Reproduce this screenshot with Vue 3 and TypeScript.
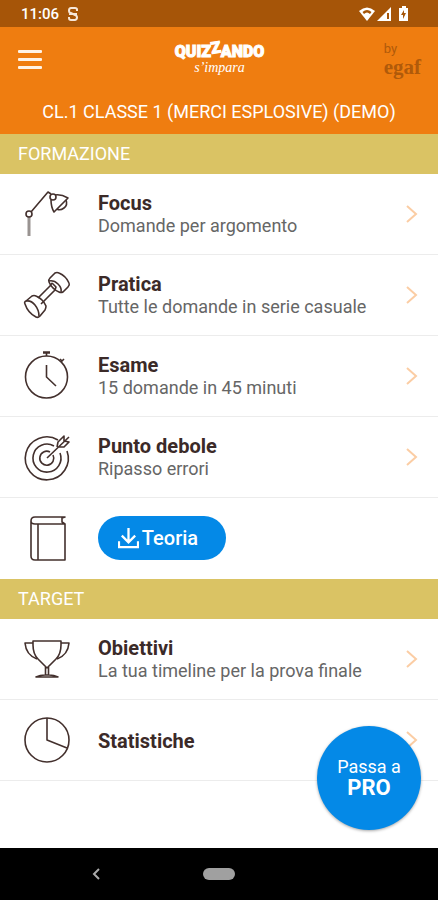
<script setup lang="ts">
type IconName = 'lamp' | 'dumbbell' | 'stopwatch' | 'target' | 'book' | 'trophy' | 'pie'

interface Entry {
  icon: IconName
  title: string
  subtitle?: string
  download?: boolean
}

interface Section {
  heading: string
  entries: Entry[]
}

const sections: Section[] = [
  {
    heading: 'FORMAZIONE',
    entries: [
      { icon: 'lamp', title: 'Focus', subtitle: 'Domande per argomento' },
      { icon: 'dumbbell', title: 'Pratica', subtitle: 'Tutte le domande in serie casuale' },
      { icon: 'stopwatch', title: 'Esame', subtitle: '15 domande in 45 minuti' },
      { icon: 'target', title: 'Punto debole', subtitle: 'Ripasso errori' },
      { icon: 'book', title: 'Teoria', download: true },
    ],
  },
  {
    heading: 'TARGET',
    entries: [
      { icon: 'trophy', title: 'Obiettivi', subtitle: 'La tua timeline per la prova finale' },
      { icon: 'pie', title: 'Statistiche' },
    ],
  },
]

const iconShapes: Record<IconName, string[]> = {
  lamp: [
    'M3 24a3 3 0 1 0 6 0a3 3 0 1 0-6 0',
    'M8 22L25 2L28 4',
    'M27 7a3 3 0 1 0 6 0a3 3 0 1 0-6 0',
    'M28 10Q28 17 31 22L45 8Q38 4 32 5',
    'M43 10Q45 15 41 18T34 19',
  ],
  dumbbell: [
    'M26 11Q25 9 27 7L32 2Q34 1 36 2Q43 5 46 12Q47 14 45 16L40 21Q38 22 36 21Q29 18 26 11Z',
    'M26 10Q31 9 35 13T38 21',
    'M29 12L33 16L32 19L18 33M29 12L27 15L15 27',
    'M2 33Q1 31 3 30L9 25Q11 24 13 25Q20 28 23 35Q23 37 22 39L17 45Q15 47 13 46Q5 42 2 33Z',
    'M3 30Q8 29 12 34T16 45',
  ],
  stopwatch: [
    'M2.5 25a21 21 0 1 0 42 0a21 21 0 1 0-42 0',
    'M20 0H27M20 1H27M23.5 0V4M37 7L39 9M38 10L41 7',
    'M23.5 13V25L33 34',
  ],
  target: [
    'M35 7A21.5 21.5 0 1 0 44 18',
    'M31 13A14 14 0 1 0 37 20',
    'M27 19A7 7 0 1 0 30 22',
    'M24 25L46 4M34 14L35 9L41 3L41 8L46 9L41 14L35 14',
  ],
  book: [
    'M42 10V46H12Q8 46 8 42V7Q8 3 12 3H42L39 4V8L42 10H12Q8 10 8 7',
    'M15 10V46',
  ],
  trophy: [
    'M10 6H38V10Q38 19 33 24L24 33L15 24Q10 19 10 10Z',
    'M10 8H2Q3 20 14 24M38 8H46Q45 20 34 24',
    'M22.500 32V40M25.500 32V40M13 42Q17 40 22 40H26Q31 40 35 42Z',
  ],
  pie: ['M2 24a22 22 0 1 0 44 0a22 22 0 1 0-44 0', 'M24 2V24L44 32'],
}
</script>

<template>
  <div class="app">
    <div class="status">
      <span class="clock">11:06</span>
      <svg class="status-s" viewBox="0 0 12 16" aria-hidden="true">
        <path d="M10 5V3.500Q10 2 8 2H4Q2 2 2 4.500T4 7L8 9Q10 9.500 10 11.500T8 14H4Q2 14 2 12V11M2 8H10" />
      </svg>
      <svg class="status-right" viewBox="0 0 50 16" aria-hidden="true">
        <path d="M0 5Q8-2 16 5L8 15Z" />
        <path class="cut" d="M3.500 6Q8 2 12.500 6L11 8Q8 5 5 8Z" />
        <path d="M18 15L32 1V15Z" />
        <path class="cut" d="M28 7H30V13H28Z" />
        <path d="M41 2H43V0H47V2H49V15H40V2Z" />
        <path class="cut" d="M45 4L42 9H44V13L47 7H45Z" />
      </svg>
    </div>

    <header class="header">
      <div class="bar">
        <button class="menu" type="button" aria-label="Menu"><i></i><i></i><i></i></button>
        <div class="logo">
          <span class="logo-name">QUIZ<span class="raised">Z</span>ANDO</span>
          <span class="logo-tag">s’impara</span>
        </div>
        <div class="brand">
          <span class="brand-by">by</span>
          <span class="brand-name">egaf</span>
        </div>
      </div>
      <h1 class="course">CL.1 CLASSE 1 (MERCI ESPLOSIVE) (DEMO)</h1>
    </header>

    <main class="content">
      <section v-for="section in sections" :key="section.heading">
        <h2 class="heading">{{ section.heading }}</h2>
        <component
          :is="entry.download ? 'div' : 'a'"
          v-for="entry in section.entries"
          :key="entry.title"
          class="row"
          :href="entry.download ? undefined : '#'"
        >
          <svg class="icon" viewBox="0 0 48 48" aria-hidden="true">
            <path v-if="entry.icon === 'lamp'" class="pole" d="M6 27V46" />
            <path v-for="shape in iconShapes[entry.icon]" :key="shape" :d="shape" />
          </svg>
          <button v-if="entry.download" class="pill" type="button">
            <svg class="download" viewBox="0 0 22 22" aria-hidden="true">
              <path d="M11 0V14M4 8L11 15L18 8M1 14V20H21V14" />
            </svg>
            {{ entry.title }}
          </button>
          <template v-else>
            <span class="text">
              <span class="title">{{ entry.title }}</span>
              <span v-if="entry.subtitle" class="subtitle">{{ entry.subtitle }}</span>
            </span>
            <svg class="chevron" viewBox="0 0 12 18" aria-hidden="true">
              <path d="M1 1L10 9L1 17" />
            </svg>
          </template>
        </component>
      </section>
      <button class="pro" type="button"><span>Passa a</span><strong>PRO</strong></button>
    </main>

    <nav class="system">
      <button class="back" type="button" aria-label="Indietro">
        <svg viewBox="0 0 8 12" aria-hidden="true"><path d="M7 1L2 6L7 11" /></svg>
      </button>
      <button class="home" type="button" aria-label="Home"></button>
    </nav>
  </div>
</template>

<style>
body {
  background: #fff;
}
</style>

<style scoped>
.app {
  display: flex;
  flex-direction: column;
  min-height: 100vh;
  font-family: Roboto, "Liberation Sans", sans-serif;
  color: #3b2a28;
}

button {
  padding: 0;
  border: 0;
  font: inherit;
  cursor: pointer;
}

.status {
  display: flex;
  align-items: center;
  height: 27px;
  padding: 0 29px 0 21px;
  background: #a65508;
  color: #fff;
}

.clock {
  font-size: 15px;
  font-weight: 500;
}

.status-s {
  width: 12px;
  height: 16px;
  margin-left: 8px;
  fill: none;
  stroke: #f6e6d8;
  stroke-width: 2;
}

.status-right {
  width: 50px;
  height: 16px;
  margin-left: auto;
  fill: #fff;
}

.cut {
  fill: #a65508;
}

.header {
  height: 107px;
  background: #ef7d10;
  color: #fff;
}

.bar {
  display: grid;
  grid-template-columns: 1fr auto 1fr;
  align-items: center;
  height: 64px;
  padding: 0 17px 0 18px;
}

.menu {
  display: flex;
  flex-direction: column;
  gap: 5px;
  width: 24px;
  background: none;
}

.menu i {
  height: 3px;
  border-radius: 1px;
  background: #fff3e6;
}

.logo {
  display: flex;
  flex-direction: column;
  align-items: center;
}

.logo-name {
  font-size: 16px;
  font-weight: 900;
  line-height: 18px;
  -webkit-text-stroke: 1px #fff;
}

.raised {
  display: inline-block;
  transform: translateY(-4px) rotate(-8deg);
}

.logo-tag {
  font-family: "Liberation Serif", serif;
  font-size: 14px;
  font-style: italic;
  line-height: 14px;
}

.brand {
  display: flex;
  flex-direction: column;
  justify-self: end;
  color: #b05a0a;
}

.brand-by {
  font-size: 13px;
  line-height: 15px;
}

.brand-name {
  font-family: "Liberation Serif", serif;
  font-size: 21px;
  font-weight: 700;
  line-height: 22px;
}

.course {
  margin: 0;
  padding-top: 10px;
  font-size: 18px;
  font-weight: 400;
  line-height: 22px;
  text-align: center;
}

.content {
  position: relative;
  flex: 1;
}

.heading {
  margin: 0;
  padding: 0 18px;
  background: #dac364;
  color: #fff;
  font-size: 18px;
  font-weight: 400;
  line-height: 40px;
}

.row {
  display: flex;
  align-items: center;
  gap: 27px;
  box-sizing: border-box;
  height: 81px;
  padding: 0 20px 0 23px;
  border-bottom: 1px solid #ececec;
  color: inherit;
  text-decoration: none;
}

.row:last-child:not(a) {
  border-bottom-color: transparent;
}

.icon {
  flex: none;
  width: 48px;
  height: 48px;
  overflow: visible;
  fill: none;
  stroke: #43302d;
  stroke-width: 1.6;
  stroke-linejoin: round;
}

.pole {
  stroke: #999391;
  stroke-width: 3;
}

.text {
  display: flex;
  flex: 1;
  flex-direction: column;
  padding-top: 1px;
}

.title {
  font-size: 20px;
  font-weight: 700;
  line-height: 22px;
}

.subtitle {
  color: #666;
  font-size: 18px;
  line-height: 23px;
}

.chevron {
  flex: none;
  width: 12px;
  height: 18px;
  fill: none;
  stroke: #fbcda4;
  stroke-width: 2;
}

.pill {
  display: flex;
  align-items: center;
  justify-content: center;
  gap: 3px;
  box-sizing: border-box;
  width: 128px;
  height: 44px;
  padding-right: 8px;
  border-radius: 22px;
  background: #0489e7;
  color: #fff;
  font-size: 20px;
  font-weight: 500;
}

.download {
  width: 21px;
  height: 21px;
  fill: none;
  stroke: #fff;
  stroke-width: 2.4;
}

.pro {
  position: absolute;
  right: 17px;
  bottom: 18px;
  display: flex;
  flex-direction: column;
  align-items: center;
  justify-content: center;
  width: 104px;
  height: 104px;
  border-radius: 50%;
  background: #0489e7;
  box-shadow: 0 1px 3px rgba(0, 0, 0, 0.35);
  color: #fff;
  font-size: 18px;
  line-height: 20px;
}

.pro strong {
  font-size: 22px;
  line-height: 22px;
}

.system {
  position: relative;
  display: flex;
  align-items: center;
  justify-content: center;
  height: 52px;
  background: #000;
}

.back {
  position: absolute;
  left: 21%;
  top: 20px;
  width: 8px;
  height: 12px;
  background: none;
}

.back svg {
  display: block;
  fill: none;
  stroke: #aaa;
  stroke-width: 2;
}

.home {
  width: 32px;
  height: 12px;
  border-radius: 6px;
  background: #a0a0a0;
}
</style>
